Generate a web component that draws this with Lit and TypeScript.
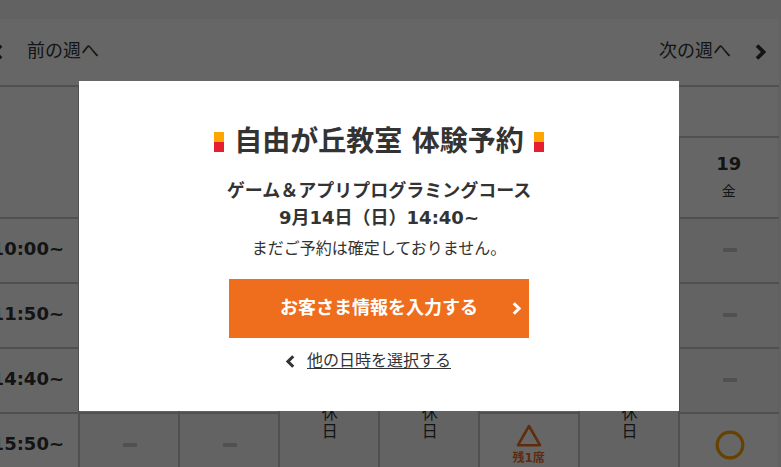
import { LitElement, html, css, svg, nothing } from "lit";
import { customElement } from "lit/decorators.js";

type Mark = "none" | "few" | "open";

const TIMES = ["10:00~", "11:50~", "14:40~", "15:50~", "", ""];
const DAYS = [
  { date: "", day: "" },
  { date: "", day: "" },
  { date: "", day: "", closed: true },
  { date: "", day: "", closed: true },
  { date: "", day: "" },
  { date: "", day: "", closed: true },
  { date: "19", day: "金" },
];

const markFor = (row: number, col: number): Mark => {
  if (row !== 3) return "none";
  if (col === 4) return "few";
  if (col === 6) return "open";
  return "none";
};

@customElement("chevron-icon")
export class ChevronIcon extends LitElement {
  static properties = { direction: { type: String } };
  declare direction: string;
  static styles = css`
    :host { display: block; }
    svg { display: block; width: 100%; height: 100%; }
    path { fill: none; stroke: currentColor; stroke-width: 3.8; }
  `;
  render() {
    const d = this.direction === "left" ? "M10 1.5 3.5 8l6.5 6.5" : "M2 1.5 8.5 8 2 14.5";
    return html`<svg viewBox="0 0 12 16" aria-hidden="true">${svg`<path d=${d} />`}</svg>`;
  }
}

@customElement("week-schedule")
export class WeekSchedule extends LitElement {
  static styles = css`
    :host { display: block; background: #fff; margin-right: 2px; }
    .nav { display: flex; justify-content: space-between; align-items: center; height: 66px; padding-right: 12px; }
    .link { display: flex; align-items: center; gap: 24px; color: #333; text-decoration: none; font-size: 18px; line-height: 24px; }
    .name { padding-bottom: 2px; }
    .prev { margin-left: -9px; }
    .arrow { width: 12px; height: 16px; }
    table { width: 100%; table-layout: fixed; border-collapse: collapse; }
    .times { width: 79px; }
    th, td { padding: 0; border: 2px solid #c8c8c8; text-align: center; box-sizing: border-box; }
    tr > :first-child { border-left: 0; }
    tr > :last-child { border-right-color: #f0f0f0; border-right-width: 1px; }
    .month { height: 51px; }
    .day { height: 81px; padding-bottom: 4px; font-weight: 400; font-size: 14px; line-height: 24px; }
    .date { display: block; font-size: 18px; line-height: 30px; font-weight: 700; }
    tbody tr { height: 65px; }
    .time { overflow: hidden; }
    .label { display: flex; justify-content: flex-end; padding: 0 14px 4px 0; font-size: 18px; line-height: 24px; }
    td { background: #f7f7f7; padding: 0 0 2px 2px; }
    .free { background: #fff; }
    .closed { padding: 20px 0 0 2px; font-size: 16px; line-height: 18px; }
    .vertical { display: block; width: 16px; margin: 0 auto; }
    .dash { display: block; width: 14px; height: 4px; border-radius: 1px; margin: 0 auto; background: #c8c8c8; }
    .symbol { display: block; margin: 0 auto; fill: none; }
    .few { padding: 0; color: #ef6e1e; font-size: 12px; font-weight: 700; line-height: 22px; }
  `;

  mark(kind: Mark) {
    if (kind === "few")
      return html`<td class="free few">
        <svg class="symbol" width="26" height="24" viewBox="0 0 26 24" role="img" aria-label="残りわずか">
          <path d="M13 3 24 22.2H2z" stroke="#ef6e1e" stroke-width="2.6" stroke-linejoin="round" />
        </svg>残1席</td>`;
    if (kind === "open")
      return html`<td class="free">
        <svg class="symbol" width="30" height="30" viewBox="0 0 30 30" role="img" aria-label="空席あり">
          <circle cx="15" cy="15" r="12.8" stroke="#ffa500" stroke-width="3.2" />
        </svg></td>`;
    return html`<td><span class="dash"></span></td>`;
  }

  render() {
    return html`
      <nav class="nav">
        <a class="link prev" href="#prev"><chevron-icon class="arrow" direction="left"></chevron-icon><span class="name">前の週へ</span></a>
        <a class="link" href="#next"><span class="name">次の週へ</span><chevron-icon class="arrow" direction="right"></chevron-icon></a>
      </nav>
      <table>
        <colgroup><col class="times" />${DAYS.map(() => html`<col />`)}</colgroup>
        <thead>
          <tr><th rowspan="2"></th><th class="month" colspan="7"></th></tr>
          <tr>${DAYS.map((d) => html`<th class="day"><span class="date">${d.date}</span>${d.day}</th>`)}</tr>
        </thead>
        <tbody>
          ${TIMES.map((time, row) => html`<tr>
            <th class="time"><span class="label">${time}</span></th>
            ${DAYS.map((d, col) => {
              if (!d.closed) return this.mark(markFor(row, col));
              return row === 0
                ? html`<td class="closed" rowspan=${TIMES.length}><span class="vertical">休日</span></td>`
                : nothing;
            })}
          </tr>`)}
        </tbody>
      </table>`;
  }
}

@customElement("reserve-dialog")
export class ReserveDialog extends LitElement {
  static styles = css`
    :host { display: block; background: #fff; text-align: center; padding: 37px 20px 38px; box-sizing: border-box; }
    h2, p { margin: 0; }
    .title { display: flex; justify-content: center; align-items: center; gap: 10px; font-size: 28px; line-height: 48px; }
    .title::before, .title::after { content: ""; width: 10px; height: 20px; background: linear-gradient(#ffa500 50%, #e61e32 50%); }
    .course { margin-top: 11px; font-size: 18px; line-height: 27px; font-weight: 700; }
    .note { margin-top: 6px; font-size: 16px; line-height: 24px; }
    .submit { display: flex; align-items: center; width: 300px; max-width: 100%; height: 59px; margin: 18px auto 0; padding: 0 7px 0 17px; border: 0; background: #ef6e1e; color: #fff; font: inherit; font-weight: 700; font-size: 18px; line-height: 24px; cursor: pointer; }
    .caption { flex: 1; padding-bottom: 2px; }
    .go { width: 10px; height: 13px; }
    .back { display: inline-flex; align-items: center; gap: 12px; margin: 11px 22px 0 0; color: #333; font-size: 16px; line-height: 24px; text-decoration: none; }
    .text { text-decoration: underline; text-underline-offset: 2px; }
  `;
  render() {
    return html`
      <h2 class="title">自由が丘教室 体験予約</h2>
      <p class="course">ゲーム＆アプリプログラミングコース<br />9月14日（日）14:40~</p>
      <p class="note">まだご予約は確定しておりません。</p>
      <button class="submit" type="button"><span class="caption">お客さま情報を入力する</span><chevron-icon class="go" direction="right"></chevron-icon></button>
      <a class="back" href="#back"><chevron-icon class="go" direction="left"></chevron-icon><span class="text">他の日時を選択する</span></a>`;
  }
}

@customElement("app-root")
export class AppRoot extends LitElement {
  static styles = css`
    :host { display: block; height: 100vh; overflow: hidden; box-sizing: border-box; padding-top: 19px; background: #f5f5f5; color: #333; font-family: "DejaVu Sans", "Noto Sans CJK JP", sans-serif; }
    .overlay { position: fixed; inset: 0; display: flex; align-items: flex-start; padding: 81px 102px 0 79px; background: rgba(0, 0, 0, 0.6); }
    .dialog { flex: 1; }
  `;
  render() {
    return html`
      <week-schedule></week-schedule>
      <div class="overlay" role="dialog" aria-modal="true"><reserve-dialog class="dialog"></reserve-dialog></div>`;
  }
}
